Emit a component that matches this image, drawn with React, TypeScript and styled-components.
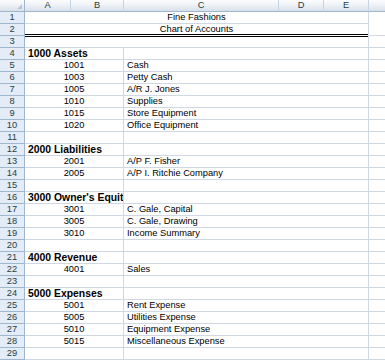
import React from "react";
import styled, { createGlobalStyle, css } from "styled-components";

const Global = createGlobalStyle`
  html, body { margin: 0; padding: 0; background: #ffffff; }
  body { font-family: "Liberation Sans", Arial, sans-serif; }
`;

const GRID = "#d0d7e5";
const HDR_BORDER = "#9eb6ce";
const HDR_TEXT = "#27413e";

const Sheet = styled.div`
  display: grid;
  grid-template-columns: 25px 46px 53px 155px 45px 45px 16px;
  grid-auto-rows: 12px;
  width: 385px;
  height: 360px;
  overflow: hidden;
  background: #ffffff;
  font-family: "Liberation Sans", Arial, sans-serif;
`;

const headerGradient = css`
  background: linear-gradient(to bottom, #fbfcfd 0%, #eef2f7 45%, #e1e7ef 80%, #d8dfe9 100%);
`;

const Corner = styled.div`
  box-sizing: border-box;
  position: relative;
  ${headerGradient};
  border-right: 1px solid ${HDR_BORDER};
  border-bottom: 1px solid ${HDR_BORDER};
  &::after {
    content: "";
    position: absolute;
    right: 2px;
    bottom: 2px;
    width: 0;
    height: 0;
    border-left: 5px solid transparent;
    border-bottom: 5px solid #b7c6d9;
  }
`;

const ColHeader = styled.div<{ $last?: boolean }>`
  box-sizing: border-box;
  ${headerGradient};
  border-bottom: 1px solid ${HDR_BORDER};
  border-right: ${(p) => (p.$last ? "none" : "1px solid #c9d4e1")};
  color: ${HDR_TEXT};
  font-size: 9.3px;
  line-height: 11px;
  text-align: center;
`;

const RowHeader = styled.div`
  box-sizing: border-box;
  background: #e4ecf7;
  border-right: 1px solid ${HDR_BORDER};
  border-bottom: 1px solid ${HDR_BORDER};
  color: ${HDR_TEXT};
  font-size: 9.3px;
  line-height: 11px;
  text-align: center;
`;

const Cell = styled.div<{
  $span: number;
  $align?: "left" | "center";
  $bold?: boolean;
  $double?: boolean;
}>`
  box-sizing: border-box;
  grid-column: span ${(p) => p.$span};
  border-right: 1px solid ${GRID};
  border-bottom: 1px solid ${(p) => (p.$double ? "#ffffff" : GRID)};
  ${(p) =>
    p.$double &&
    css`
      box-shadow: inset 0 -1px 0 #000000, 0 1px 0 #000000;
    `}
  padding: 0 3px;
  overflow: hidden;
  white-space: nowrap;
  text-align: ${(p) => p.$align ?? "left"};
  color: #000000;
  font-size: ${(p) => (p.$bold ? "10.4px" : "9.3px")};
  font-weight: ${(p) => (p.$bold ? 700 : 400)};
  line-height: 11px;
`;

const Spare = styled.div<{ $noLine?: boolean }>`
  box-sizing: border-box;
  border-bottom: ${(p) => (p.$noLine ? "none" : `1px solid ${GRID}`)};
`;

type Entry =
  | { kind: "head"; text: string }
  | { kind: "item"; code: string; name: string }
  | { kind: "blank" };

const entries: Entry[] = [
  { kind: "head", text: "1000 Assets" },
  { kind: "item", code: "1001", name: "Cash" },
  { kind: "item", code: "1003", name: "Petty Cash" },
  { kind: "item", code: "1005", name: "A/R J. Jones" },
  { kind: "item", code: "1010", name: "Supplies" },
  { kind: "item", code: "1015", name: "Store Equipment" },
  { kind: "item", code: "1020", name: "Office Equipment" },
  { kind: "blank" },
  { kind: "head", text: "2000 Liabilities" },
  { kind: "item", code: "2001", name: "A/P F. Fisher" },
  { kind: "item", code: "2005", name: "A/P I. Ritchie Company" },
  { kind: "blank" },
  { kind: "head", text: "3000 Owner's Equity" },
  { kind: "item", code: "3001", name: "C. Gale, Capital" },
  { kind: "item", code: "3005", name: "C. Gale, Drawing" },
  { kind: "item", code: "3010", name: "Income Summary" },
  { kind: "blank" },
  { kind: "head", text: "4000 Revenue" },
  { kind: "item", code: "4001", name: "Sales" },
  { kind: "blank" },
  { kind: "head", text: "5000 Expenses" },
  { kind: "item", code: "5001", name: "Rent Expense" },
  { kind: "item", code: "5005", name: "Utilities Expense" },
  { kind: "item", code: "5010", name: "Equipment Expense" },
  { kind: "item", code: "5015", name: "Miscellaneous Expense" },
  { kind: "blank" },
];

export default function App() {
  return (
    <>
      <Global />
      <Sheet>
        <Corner />
        <ColHeader>A</ColHeader>
        <ColHeader>B</ColHeader>
        <ColHeader>C</ColHeader>
        <ColHeader>D</ColHeader>
        <ColHeader>E</ColHeader>
        <ColHeader $last />

        <RowHeader>1</RowHeader>
        <Cell $span={5} $align="center">Fine Fashions</Cell>
        <Spare $noLine />

        <RowHeader>2</RowHeader>
        <Cell $span={5} $align="center" $double>Chart of Accounts</Cell>
        <Spare />

        <RowHeader>3</RowHeader>
        <Cell $span={5} />
        <Spare />

        {entries.map((e, i) => {
          const row = i + 4;
          return (
            <React.Fragment key={row}>
              <RowHeader>{row}</RowHeader>
              {e.kind === "head" ? (
                <Cell $span={2} $bold>{e.text}</Cell>
              ) : e.kind === "item" ? (
                <Cell $span={2} $align="center">{e.code}</Cell>
              ) : (
                <Cell $span={2} />
              )}
              <Cell $span={3}>{e.kind === "item" ? e.name : ""}</Cell>
              <Spare />
            </React.Fragment>
          );
        })}
      </Sheet>
    </>
  );
}
